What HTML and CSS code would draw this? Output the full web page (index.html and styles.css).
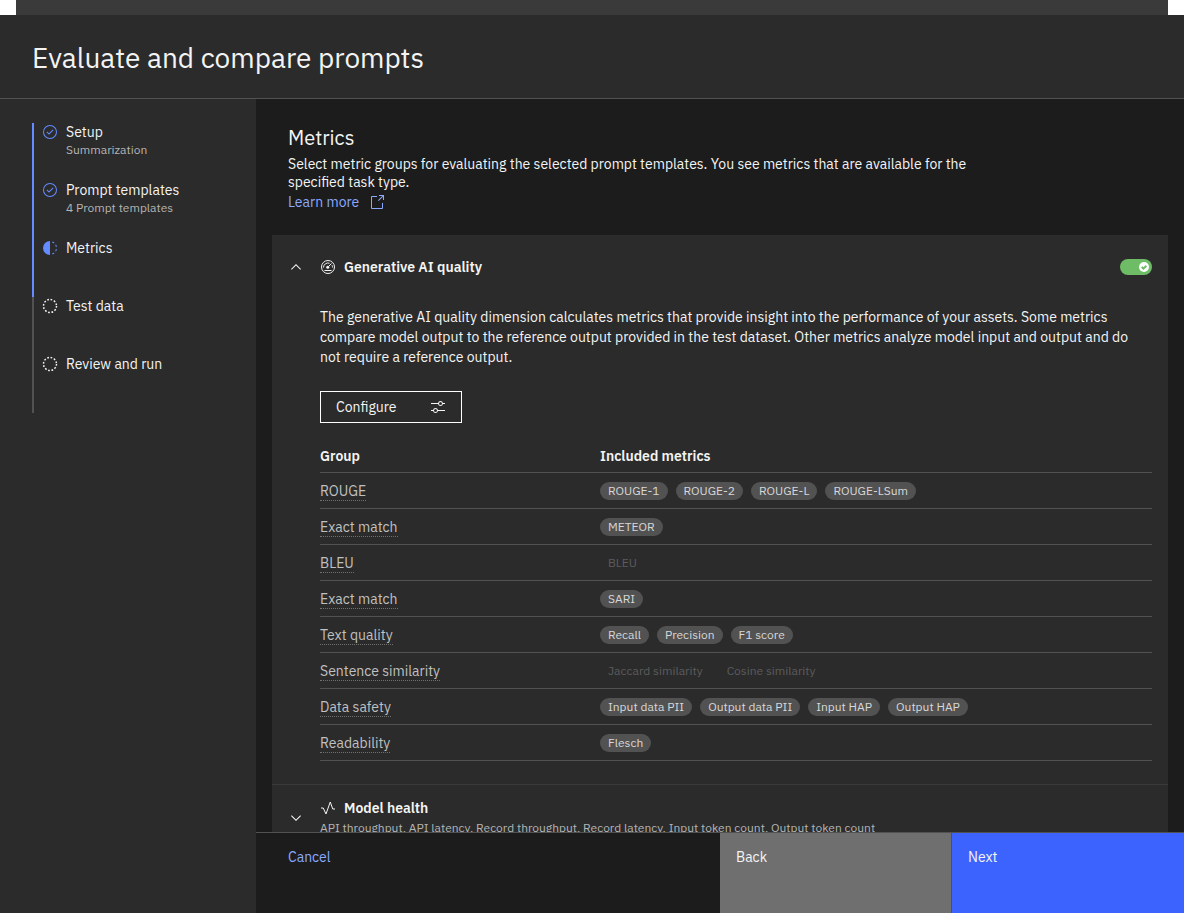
FILE: index.html
```html
<!DOCTYPE html>
<html lang="en">
<head>
    <meta charset="UTF-8">
    <meta name="viewport" content="width=device-width, initial-scale=1.0">
    <title>Evaluate and compare prompts</title>
    <link rel="stylesheet" href="styles.css">
</head>
<body>
    <div class="backdrop"></div>

    <div class="tearsheet">
        <header class="tearsheet-header">
            <h1>Evaluate and compare prompts</h1>
        </header>

        <nav class="sidebar" aria-label="Progress">
            <ol class="steps">
                <li class="step done">
                    <svg class="icon" viewBox="0 0 32 32"><path d="M14 21.4 9 16.4 10.4 15 14 18.6 21.6 11 23 12.4z"/><path d="M16 2a14 14 0 1 0 14 14A14 14 0 0 0 16 2Zm0 26a12 12 0 1 1 12-12 12 12 0 0 1-12 12Z"/></svg>
                    <div>
                        <p class="step-title">Setup</p>
                        <p class="step-note">Summarization</p>
                    </div>
                </li>
                <li class="step done">
                    <svg class="icon" viewBox="0 0 32 32"><path d="M14 21.4 9 16.4 10.4 15 14 18.6 21.6 11 23 12.4z"/><path d="M16 2a14 14 0 1 0 14 14A14 14 0 0 0 16 2Zm0 26a12 12 0 1 1 12-12 12 12 0 0 1-12 12Z"/></svg>
                    <div>
                        <p class="step-title">Prompt templates</p>
                        <p class="step-note">4 Prompt templates</p>
                    </div>
                </li>
                <li class="step done" aria-current="step">
                    <svg class="icon" viewBox="0 0 32 32"><path d="M23.8 6.9l1.3-1.6A14 14 0 0 0 20.9 2.9l-.7 1.9a12 12 0 0 1 3.6 2.1zM27.8 14l2-.4A13.9 13.9 0 0 0 28.1 9l-1.7 1a12.5 12.5 0 0 1 1.4 4zM20.2 27.2l.7 1.9a14 14 0 0 0 4.2-2.4l-1.3-1.6a12 12 0 0 1-3.6 2.1zM26.4 22l1.7 1a14.1 14.1 0 0 0 1.7-4.6l-2-.3a12.2 12.2 0 0 1-1.4 3.9zM16 30V2a14 14 0 0 0 0 28z"/></svg>
                    <p class="step-title">Metrics</p>
                </li>
                <li class="step">
                    <svg class="icon" viewBox="0 0 32 32"><circle class="dash-ring" cx="16" cy="16" r="13" pathLength="24"/></svg>
                    <p class="step-title">Test data</p>
                </li>
                <li class="step">
                    <svg class="icon" viewBox="0 0 32 32"><circle class="dash-ring" cx="16" cy="16" r="13" pathLength="24"/></svg>
                    <p class="step-title">Review and run</p>
                </li>
            </ol>
        </nav>

        <main class="content">
            <div class="intro">
                <h2>Metrics</h2>
                <p>Select metric groups for evaluating the selected prompt templates. You see metrics that are available for the specified task type.</p>
                <a class="learn-more" href="#">Learn more
                    <svg class="icon" viewBox="0 0 32 32"><path d="M26 30H6a2 2 0 0 1-2-2V6a2 2 0 0 1 2-2h10v2H6v22h20V18h2v10a2 2 0 0 1-2 2z"/><path d="M20 2v2h6.600L18 12.600 19.400 14 28 5.400V12h2V2z"/></svg>
                </a>
            </div>

            <section class="group">
                <div class="group-header">
                    <button class="expander" type="button" aria-expanded="true" aria-label="Collapse Generative AI quality">
                        <svg class="icon" viewBox="0 0 32 32"><path d="M16 10 26 20 24.6 21.4 16 12.8 7.4 21.4 6 20z"/></svg>
                    </button>
                    <svg class="icon" viewBox="0 0 32 32"><g class="lines"><circle cx="16" cy="16" r="13"/><path d="M7 17a9 9 0 0 1 12-8.500M24 12.500a9 9 0 0 1 1 4.500M17 15 23 9M9 23h14"/></g><circle cx="15.500" cy="16.500" r="3"/></svg>
                    <h3>Generative AI quality</h3>
                    <label class="toggle">
                        <input type="checkbox" role="switch" aria-label="Generative AI quality" checked>
                        <svg viewBox="0 0 10 10"><circle cx="5" cy="5" r="5"/><path d="M2.700 5 4.400 6.600 7.400 3.700"/></svg>
                    </label>
                </div>

                <div class="group-body">
                    <p>The generative AI quality dimension calculates metrics that provide insight into the performance of your assets. Some metrics compare model output to the reference output provided in the test dataset. Other metrics analyze model input and output and do not require a reference output.</p>

                    <button class="configure" type="button">Configure
                        <svg class="icon" viewBox="0 0 32 32"><path d="M30 8h-4.100a5 5 0 0 0-9.800 0H2v2h14.100a5 5 0 0 0 9.800 0H30zM21 12a3 3 0 1 1 3-3 3 3 0 0 1-3 3zM2 24h4.100a5 5 0 0 0 9.800 0H30v-2H15.900a5 5 0 0 0-9.800 0H2zM11 20a3 3 0 1 1-3 3 3 3 0 0 1 3-3z"/></svg>
                    </button>

                    <table class="metrics">
                        <thead>
                            <tr><th scope="col">Group</th><th scope="col">Included metrics</th></tr>
                        </thead>
                        <tbody>
                            <tr>
                                <td><button class="term" type="button">ROUGE</button></td>
                                <td><div class="tags"><span class="tag">ROUGE-1</span><span class="tag">ROUGE-2</span><span class="tag">ROUGE-L</span><span class="tag">ROUGE-LSum</span></div></td>
                            </tr>
                            <tr>
                                <td><button class="term" type="button">Exact match</button></td>
                                <td><div class="tags"><span class="tag">METEOR</span></div></td>
                            </tr>
                            <tr>
                                <td><button class="term" type="button">BLEU</button></td>
                                <td><div class="tags"><span class="tag off">BLEU</span></div></td>
                            </tr>
                            <tr>
                                <td><button class="term" type="button">Exact match</button></td>
                                <td><div class="tags"><span class="tag">SARI</span></div></td>
                            </tr>
                            <tr>
                                <td><button class="term" type="button">Text quality</button></td>
                                <td><div class="tags"><span class="tag">Recall</span><span class="tag">Precision</span><span class="tag">F1 score</span></div></td>
                            </tr>
                            <tr>
                                <td><button class="term" type="button">Sentence similarity</button></td>
                                <td><div class="tags"><span class="tag off">Jaccard similarity</span><span class="tag off">Cosine similarity</span></div></td>
                            </tr>
                            <tr>
                                <td><button class="term" type="button">Data safety</button></td>
                                <td><div class="tags"><span class="tag">Input data PII</span><span class="tag">Output data PII</span><span class="tag">Input HAP</span><span class="tag">Output HAP</span></div></td>
                            </tr>
                            <tr>
                                <td><button class="term" type="button">Readability</button></td>
                                <td><div class="tags"><span class="tag">Flesch</span></div></td>
                            </tr>
                        </tbody>
                    </table>
                </div>
            </section>

            <section class="group">
                <div class="group-header collapsed">
                    <button class="expander" type="button" aria-expanded="false" aria-label="Expand Model health">
                        <svg class="icon" viewBox="0 0 32 32"><path d="M16 22 6 12 7.400 10.600 16 19.200 24.600 10.600 26 12z"/></svg>
                    </button>
                    <div>
                        <div class="group-title">
                            <svg class="icon" viewBox="0 0 32 32"><path class="lines" d="M2 16H6.500L12 28 20.500 4 25.500 18H30"/></svg>
                            <h3>Model health</h3>
                        </div>
                        <p class="group-note">API throughput, API latency, Record throughput, Record latency, Input token count, Output token count</p>
                    </div>
                </div>
            </section>
        </main>

        <footer class="actions">
            <button class="cancel" type="button">Cancel</button>
            <button class="back" type="button">Back</button>
            <button class="next" type="button">Next</button>
        </footer>
    </div>
</body>
</html>
```
FILE: styles.css
```css
* {
    box-sizing: border-box;
}

body {
    display: flex;
    flex-direction: column;
    height: 100vh;
    margin: 0;
    overflow: hidden;
    background-color: #fff;
    color: #f4f4f4;
    font-family: "IBM Plex Sans", "Open Sans", sans-serif;
    font-size: 14px;
    line-height: 20px;
}

h1, h2, h3, p, ol {
    margin: 0;
    padding: 0;
}

button {
    border: none;
    padding: 0;
    background: none;
    color: inherit;
    font: inherit;
    text-align: left;
    cursor: pointer;
}

.icon {
    flex: none;
    width: 16px;
    height: 16px;
    fill: currentColor;
}

.lines {
    fill: none;
    stroke: currentColor;
    stroke-width: 2;
}

.backdrop {
    flex: none;
    height: 15px;
    margin: 0 16px;
    background-color: #3a3a3a;
}

.tearsheet {
    flex: 1;
    min-height: 0;
    display: grid;
    grid-template-columns: 256px 1fr;
    grid-template-rows: auto minmax(0, 1fr) auto;
    background-color: #2b2b2b;
}

.tearsheet-header {
    grid-column: 1 / -1;
    padding: 25px 32px 22px;
    border-bottom: 1px solid #525252;
}

h1 {
    font-size: 28px;
    font-weight: 400;
    line-height: 36px;
}

.sidebar {
    grid-row: 2 / 4;
    padding: 24px 32px;
}

.steps {
    list-style: none;
}

.step {
    display: flex;
    gap: 8px;
    height: 58px;
    padding-left: 8px;
    border-left: 2px solid #525252;
    line-height: 18px;
}

.step .icon {
    margin-top: 1px;
}

.step.done {
    border-left-color: #648bff;
}

.step.done .icon {
    color: #648bff;
}

.step-note {
    color: #b5b5b5;
    font-size: 12px;
}

.dash-ring {
    fill: none;
    stroke: currentColor;
    stroke-width: 3;
    stroke-dasharray: 1;
}

/* Main content */
.content {
    overflow: hidden;
    padding: 25px 16px 0;
    background-color: #1c1c1c;
}

.intro {
    max-width: 752px;
    padding: 0 16px 24px;
    line-height: 18px;
}

h2 {
    margin-bottom: 3px;
    font-size: 20px;
    font-weight: 400;
    line-height: 28px;
}

.learn-more {
    display: flex;
    align-items: center;
    gap: 10px;
    margin-top: 2px;
    color: #8ba9ff;
    text-decoration: none;
}

.group {
    border-bottom: 1px solid #3a3a3a;
    background-color: #2b2b2b;
}

.group-header {
    display: flex;
    align-items: center;
    gap: 8px;
    height: 64px;
    padding: 0 16px;
}

.group-header.collapsed {
    height: 66px;
}

.group-title {
    display: flex;
    align-items: center;
    gap: 8px;
}

.expander {
    display: flex;
    margin-right: 8px;
}

h3 {
    font-size: 14px;
    font-weight: 600;
}

.group-note {
    color: #b5b5b5;
    font-size: 12px;
}

.toggle {
    display: grid;
    align-items: center;
    margin-left: auto;
}

.toggle input,
.toggle svg {
    grid-area: 1 / 1;
}

.toggle input {
    appearance: none;
    width: 32px;
    height: 16px;
    margin: 0;
    border-radius: 8px;
    background-color: #6fbc66;
}

.toggle svg {
    justify-self: end;
    width: 10px;
    height: 10px;
    margin-right: 3px;
    fill: #fff;
    pointer-events: none;
}

.toggle path {
    fill: none;
    stroke: #6fbc66;
    stroke-width: 2;
}

.group-body {
    padding: 8px 16px 23px 48px;
}

.configure {
    display: flex;
    align-items: center;
    gap: 34px;
    height: 32px;
    margin: 24px 0 16px;
    padding: 0 15px;
    border: 1px solid #fff;
}

/* Metric groups table */
.metrics {
    width: 100%;
    border-collapse: collapse;
}

.metrics th,
.metrics td {
    height: 36px;
    padding: 2px 0 0;
    border-bottom: 1px solid #525252;
    text-align: left;
}

.metrics th {
    height: 33px;
    font-weight: 600;
}

.metrics th:first-child {
    width: 280px;
}

.term {
    display: block;
    border-bottom: 1px dotted #6f6f6f;
    color: #c0c0c0;
    line-height: 18px;
}

.tags {
    display: flex;
    gap: 8px;
}

.tag {
    padding: 0 8px;
    border-radius: 9px;
    background-color: #525252;
    color: #d8d8d8;
    font-size: 12px;
    line-height: 18px;
}

.tag.off {
    background: none;
    color: #5c5c5c;
}

/* Footer buttons */
.actions {
    display: grid;
    grid-template-columns: 2fr 1fr 1fr;
    height: 81px;
    border-top: 1px solid #525252;
    background-color: #1c1c1c;
}

.actions button {
    display: flex;
    padding: 14px 16px;
}

.actions .cancel {
    padding-left: 32px;
    color: #8ba9ff;
}

.actions .back {
    border-right: 1px solid #525252;
    background-color: #6f6f6f;
}

.actions .next {
    background-color: #3d63ff;
}
```
